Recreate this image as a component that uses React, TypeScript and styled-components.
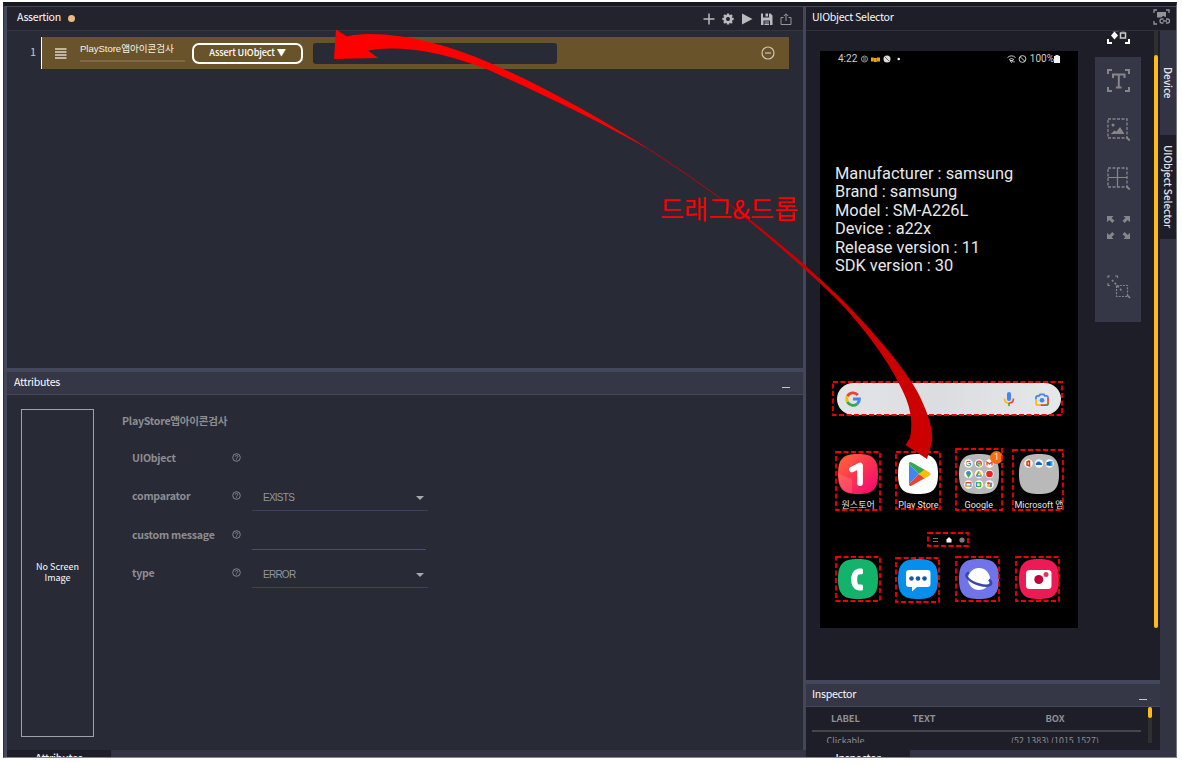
import React from 'react';
import styled, { createGlobalStyle, css } from 'styled-components';

const c = {
  line: '#43475b',
  head: '#353746',
  headDark: '#23232e',
  body: '#282a35',
  deep: '#1e1e28',
  rail: '#323443',
  gold: '#69532a',
  yellow: '#ffbb1c',
};

const ui = '"Noto Sans CJK KR", "Noto Sans", sans-serif';

const Global = createGlobalStyle`
  * { box-sizing: border-box; }
  body { margin: 0; background: #fff; font-family: ${ui}; overflow: hidden; }
  svg { display: block; flex: none; }
`;

const Page = styled.div`
  position: relative;
  width: 1182px;
  height: 763px;
  padding: 2px 0 0 3px;
`;
const Frame = styled.div`
  width: 1174px;
  height: 756px;
  overflow: hidden;
  background: ${c.rail};
  border-top: 4px solid #181821;
  border-left: 1px solid #2d303d;
  border-right: 1px solid #777783;
  border-bottom: 1px solid #85858f;
`;
const Workspace = styled.div`
  display: flex;
  height: 751px;
  border-top: 1px solid ${c.line};
  border-left: 3px solid ${c.line};
`;
const LeftColumn = styled.div`
  width: 796px;
  flex: none;
  display: flex;
  flex-direction: column;
`;
const VSplit = styled.div`
  width: 3px;
  flex: none;
  height: 743px;
  background: ${c.line};
`;
const HSplit = styled.div`
  height: 4px;
  flex: none;
  background: ${c.line};
`;
const RightColumn = styled.div`
  flex: 1;
  display: flex;
  flex-direction: column;
`;
const Header = styled.div<{ $bg: string; $line: string; $x?: number; $h?: number }>`
  display: flex;
  align-items: center;
  height: ${p => p.$h ?? 24}px;
  flex: none;
  padding: 0 11px ${p => (p.$h ? 3 : 4)}px ${p => p.$x ?? 10}px;
  background: ${p => p.$bg};
  border-bottom: 1px solid ${p => p.$line};
  color: #fafafb;
  font-size: 10.6px;
  letter-spacing: -0.28px;
  line-height: 16px;
  white-space: nowrap;
`;
const Dot = styled.span`
  width: 7px;
  height: 7px;
  margin: 4px 0 0 7px;
  border-radius: 50%;
  background: #edba82;
`;
const Tools = styled.div`
  display: flex;
  align-items: center;
  gap: 7px;
  margin: 5px 0 0 auto;
`;
const Minimize = styled.i`
  width: 8px;
  height: 1px;
  margin: 12px 2px 0 auto;
  background: #c6c6cc;
`;

const AssertBody = styled.div`
  height: 337px;
  flex: none;
  padding-top: 6px;
  background: ${c.body};
`;
const AssertRow = styled.div`
  display: flex;
  height: 32px;
`;
const LineNo = styled.div`
  width: 34px;
  padding: 6px 5px 0 0;
  text-align: right;
  color: #c5c5c9;
  font-size: 11px;
  line-height: 16px;
`;
const AssertCard = styled.div`
  display: flex;
  align-items: center;
  width: 748px;
  padding: 0 14px 0 13px;
  border-left: 1px solid #fff;
  background: ${c.gold};
`;
const NameField = styled.div`
  width: 105px;
  height: 21px;
  margin: -3px 7px 0 13px;
  border-bottom: 2px solid #7d6946;
  color: #f4f1ea;
  font: 9.6px/16px "Liberation Sans", "Noto Sans CJK KR", sans-serif;
  letter-spacing: -0.05px;
  white-space: nowrap;
`;
const Pill = styled.button`
  width: 111px;
  height: 21px;
  margin: 0 10px 0 0;
  padding: 0 0 2px 0;
  border: 2px solid #fff;
  border-radius: 7px;
  background: transparent;
  color: #fff;
  font: 500 9.2px/14px ${ui};
  letter-spacing: -0.15px;
  white-space: nowrap;
`;
const DropInput = styled.div`
  width: 244px;
  height: 21px;
  margin-right: auto;
  border-radius: 3px;
  background: ${c.body};
`;

const AttrBody = styled.div`
  display: flex;
  height: 355px;
  flex: none;
  padding: 14px 0 0 14px;
  background: ${c.body};
`;
const Preview = styled.div`
  display: flex;
  align-items: center;
  justify-content: center;
  width: 73px;
  height: 328px;
  padding-bottom: 2px;
  border: 1px solid #9fa0a8;
  color: #fafafb;
  font-size: 9px;
  line-height: 11px;
  text-align: center;
`;
const Form = styled.div`
  margin-left: 28px;
  padding-top: 4px;
  color: #8d8d92;
`;
const FormTitle = styled.div`
  height: 28px;
  font-size: 10.6px;
  font-weight: 700;
  letter-spacing: -0.25px;
  line-height: 16px;
`;
const FormRow = styled.div`
  display: flex;
  height: 38.4px;
  padding-left: 10px;
  font-size: 10.6px;
  font-weight: 700;
  line-height: 16px;
`;
const FieldName = styled.div`
  width: 100px;
  padding-top: 9px;
  letter-spacing: -0.26px;
  white-space: nowrap;
`;
const HelpSlot = styled.div`
  width: 20px;
  padding-top: 12px;
`;
const Field = styled.div<{ $w: number; $line: string }>`
  display: flex;
  align-items: center;
  justify-content: space-between;
  width: ${p => p.$w}px;
  height: 26px;
  margin-top: 6px;
  padding: 0 4px 0 11px;
  border-bottom: 1px solid ${p => p.$line};
  color: #95959a;
  font: 10px/14px "Liberation Sans", sans-serif;
  letter-spacing: -0.75px;
`;
const Caret = styled.i`
  border: 4px solid transparent;
  border-top-color: #a9a9ad;
  border-bottom: 0;
`;

const BottomTabs = styled.div`
  height: 7px;
  flex: none;
  overflow: hidden;
  background: ${c.rail};
`;
const BottomTab = styled.div`
  width: 104px;
  height: 16px;
  background: ${c.deep};
  color: #f2f2f4;
  font-size: 10.4px;
  font-weight: 500;
  letter-spacing: -0.2px;
  line-height: 15px;
  text-align: center;
`;

const SelectorArea = styled.div`
  display: flex;
  flex: 1;
  min-height: 0;
`;
const SelectorMain = styled.div`
  width: 354px;
  flex: none;
  display: flex;
  flex-direction: column;
`;
const Stage = styled.div`
  display: flex;
  height: 649px;
  flex: none;
  background: ${c.deep};
`;
const Phone = styled.div`
  position: relative;
  width: 258px;
  height: 577px;
  margin: 20px 17px 0 14px;
  background: #000;
  color: #e8e8e8;
  font-family: Roboto, "Noto Sans CJK KR", sans-serif;
`;
const StatusBar = styled.div`
  display: flex;
  align-items: center;
  gap: 3px;
  height: 15px;
  padding: 0 18px 0 18px;
  color: #cfcfcf;
  font-size: 10px;
`;
const Grow = styled.span`
  flex: 1;
`;
const Battery = styled.svg`
  margin-left: -3px;
`;
const Info = styled.div`
  margin: 99px 0 0 15px;
  height: 112px;
  font-size: 16.4px;
  line-height: 18.4px;
  white-space: nowrap;
`;
const Search = styled.div`
  display: flex;
  align-items: center;
  width: 224px;
  height: 32px;
  margin: 106px 0 0 17px;
  padding: 0 12px 0 8px;
  border-radius: 16px;
  background: linear-gradient(90deg, #e3e4e6, #dcdde1 45%, #e5e7e8);
`;
const MicGap = styled.span`
  width: 20px;
`;
const AppRow = styled.div<{ $top: number }>`
  display: grid;
  grid-template-columns: repeat(4, 60.3px);
  margin: ${p => p.$top}px 0 0 8px;
`;
const AppCell = styled.div`
  display: flex;
  flex-direction: column;
  align-items: center;
  font-size: 9px;
  line-height: 12px;
  white-space: nowrap;
`;
const AppLabel = styled.div`
  margin-top: 5px;
`;
const Pager = styled.div`
  display: flex;
  align-items: center;
  justify-content: center;
  gap: 7px;
  height: 14px;
  margin-top: 22px;
`;
const Selection = styled.div<{ $x: number; $y: number; $w: number; $h: number }>`
  position: absolute;
  left: ${p => p.$x}px;
  top: ${p => p.$y}px;
  width: ${p => p.$w}px;
  height: ${p => p.$h}px;
`;
const Badge = styled.div`
  position: absolute;
  left: 170px;
  top: 400px;
  width: 13px;
  height: 13px;
  border-radius: 50%;
  background: #f66d10;
  color: #ffe9d8;
  font-size: 9px;
  line-height: 13px;
  text-align: center;
`;
const ToolColumn = styled.div`
  width: 46px;
  display: flex;
  flex-direction: column;
`;
const ActiveTool = styled.div`
  display: flex;
  align-items: flex-end;
  justify-content: center;
  height: 14px;
  margin: 0 0 12px 1px;
  overflow: hidden;
`;
const Palette = styled.div`
  display: flex;
  flex-direction: column;
  align-items: center;
  gap: 25px;
  height: 265px;
  padding: 12px 0 0 1px;
  background: ${c.head};
  & > :last-child { margin-top: 10px; }
`;
const ScrollTrack = styled.div<{ $h: number; $w: number; $m: string }>`
  width: ${p => p.$w}px;
  height: ${p => p.$h}px;
  margin: ${p => p.$m};
  background: #302f30;
`;
const ScrollThumb = styled.div<{ $h: number; $top: number }>`
  height: ${p => p.$h}px;
  border-radius: 2px;
  background: ${c.yellow};
  transform: translateY(${p => p.$top}px);
`;
const Rail = styled.div`
  flex: 1;
  background: ${c.rail};
`;
const RailTab = styled.div<{ $active?: boolean }>`
  display: flex;
  align-items: center;
  justify-content: center;
  height: 104px;
  width: 16px;
  writing-mode: vertical-rl;
  color: #e4e4e6;
  font-size: 10.2px;
  font-weight: 500;
  letter-spacing: -0.12px;
  line-height: 19px;
  white-space: nowrap;
  ${p => p.$active && css`background: ${c.deep};`}
`;
const InspectBody = styled.div`
  display: flex;
  height: 43px;
  flex: none;
  background: ${c.deep};
  overflow: hidden;
`;
const Table = styled.div`
  width: 329px;
  height: 36px;
  margin-left: 6px;
  overflow: hidden;
  color: #8f8f94;
`;
const Cells = styled.div<{ $head?: boolean }>`
  display: grid;
  grid-template-columns: 67px 90px 1fr;
  text-align: center;
  white-space: nowrap;
  font-size: ${p => (p.$head ? 9.4 : 8.9)}px;
  font-weight: ${p => (p.$head ? 700 : 400)};
  line-height: ${p => (p.$head ? 22 : 17)}px;
  ${p => p.$head && css`padding-bottom: 1px; border-bottom: 2px solid #46464b;`}
`;
const Annotation = styled.svg`
  position: absolute;
  left: 0;
  top: 0;
  pointer-events: none;
`;
const DragLabel = styled.div`
  position: absolute;
  left: 660px;
  top: 189px;
  color: #fe0000;
  font-size: 26.2px;
  font-weight: 400;
  line-height: 38px;
  white-space: nowrap;
`;

const Help = () => (
  <svg width="9" height="9" viewBox="0 0 9 9" fill="none" stroke="#8d8d92" strokeWidth=".9">
    <circle cx="4.5" cy="4.5" r="3.8" />
    <path d="M3.2 3.7c0-1.8 2.7-1.7 2.7-.1 0 1-1.4.9-1.4 2M4.5 6.3v.8" />
  </svg>
);

const Gear = () => (
  <svg width="12" height="12" viewBox="0 0 24 24">
    <g fill="#b9b9be">
      {[0, 45, 90, 135].map(a => (
        <rect key={a} x="9.5" y=".8" width="5" height="22.4" rx="1" transform={`rotate(${a} 12 12)`} />
      ))}
      <circle cx="12" cy="12" r="8.5" />
    </g>
    <circle cx="12" cy="12" r="4" fill={c.headDark} />
  </svg>
);

const Corners = ({ color = '#85858a' }: { color?: string }) => (
  <path d="M1 5V1H5M18 1H22V5M22 18V22H18M5 22H1V18" stroke={color} strokeWidth="2" fill="none" />
);
const DashedLens = () => (
  <>
    <rect x="1" y="1" width="19" height="19" fill="none" stroke="#85858a" strokeWidth="1.3" strokeDasharray="3 1.5" />
    <path d="M19.5 19.5l3.3 3" stroke="#85858a" strokeWidth="1.8" />
  </>
);
const ToolIcon = ({ children }: { children: React.ReactNode }) => (
  <svg width="24" height="24" viewBox="0 0 24 24">{children}</svg>
);

const TextTool = () => (
  <ToolIcon>
    <Corners />
    <path d="M6 9V5.5H17.5V9M11.8 5.5V18.5M9 18.5H14.6" stroke="#85858a" strokeWidth="2" fill="none" />
  </ToolIcon>
);
const ImageTool = () => (
  <ToolIcon>
    <DashedLens />
    <circle cx="6" cy="7" r="1.5" fill="#85858a" />
    <path d="M3.5 16l4-3.5 2 1L13 9l4.5 7z" fill="#85858a" />
  </ToolIcon>
);
const GridTool = () => (
  <ToolIcon>
    <DashedLens />
    <path d="M10.5 1v19M1 10.5h19" stroke="#85858a" strokeWidth="1.2" />
  </ToolIcon>
);
const ExpandTool = () => (
  <ToolIcon>
    <path d="M0 0h6.5L4.6 1.9 7.5 4.8 5.3 7 2.3 4 0 6.3zM23 0h-6.5l1.9 1.9-2.9 2.9L17.7 7l3-3L23 6.3zM0 23h6.5l-1.9-1.9 2.900-2.900L5.300 16l-3 3L0 16.700zM23 23h-6.500l1.900-1.900-2.900-2.900L17.700 16l3 3L23 16.700z" fill="#85858a" />
  </ToolIcon>
);
const LinkedTool = () => (
  <ToolIcon>
    <g fill="none" stroke="#85858a" strokeWidth="1.2">
      <path d="M1 3V1h2M8 1h2.5v2M1 8v2.5h2" />
      <rect x="9.5" y="10.5" width="11" height="11" strokeDasharray="2 1.2" />
      <path d="M5 5l11 12" strokeWidth="1.7" strokeDasharray="2 2" />
      <path d="M20 20l3 3" strokeWidth="1.6" />
    </g>
  </ToolIcon>
);

const squircle = 'M20 0C35 0 40 5 40 20S35 40 20 40 0 35 0 20 5 0 20 0Z';
const AppIcon = ({ bg, children }: { bg: string; children?: React.ReactNode }) => (
  <svg width="40" height="40" viewBox="0 0 40 40">
    <path d={squircle} fill={bg} />
    {children}
  </svg>
);
const GoogleG = ({ size, x, y }: { size: number; x?: number; y?: number }) => (
  <svg x={x} y={y} width={size} height={size} viewBox="0 0 20 20" fill="none" strokeWidth="3.6">
    <path d="M16 5A8 8 0 0 0 3 6.5" stroke="#ea4335" />
    <path d="M3 6.5A8 8 0 0 0 3 13.5" stroke="#fbbc05" />
    <path d="M3 13.5A8 8 0 0 0 15.3 16" stroke="#34a853" />
    <path d="M15.3 16A8 8 0 0 0 18 10H10" stroke="#4285f4" />
  </svg>
);

const folderDots: [number, number][] = [9.5, 20, 30.5].flatMap(y => [9.5, 20, 30.5].map(x => [x, y] as [number, number]));

const GoogleFolder = () => (
  <AppIcon bg="#b9b9b9">
    {folderDots.map(([x, y]) => <circle key={`${x}-${y}`} cx={x} cy={y} r="4.3" fill="#f7f7f7" />)}
    <GoogleG size={6} x={6.5} y={6.5} />
    <circle cx="20" cy="9.5" r="3" fill="#ea4335" />
    <path d="M20 9.5l2.6 1.5A3 3 0 0 1 20 12.5z" fill="#fbbc05" />
    <path d="M20 9.5v3a3 3 0 0 1-2.7-4.3z" fill="#34a853" />
    <circle cx="20" cy="9.5" r="1.4" fill="#4285f4" stroke="#fff" strokeWidth=".5" />
    <path d="M28 11.5V8l2.5 2L33 8v3.5" fill="none" stroke="#ea4335" strokeWidth="1.3" />
    <path d="M9.5 24l-2.3-4a2.4 2.4 0 1 1 4.6 0z" fill="#34a853" />
    <path d="M7.3 18.5a2.4 2.4 0 0 1 4 0l-1.8 1.8z" fill="#4285f4" />
    <path d="M20 17.5l-2.7 4.5" stroke="#34a853" strokeWidth="1.5" />
    <path d="M20 17.5l2.7 4.5" stroke="#fbbc05" strokeWidth="1.5" />
    <path d="M17.5 22h5" stroke="#4285f4" strokeWidth="1.5" />
    <circle cx="30.5" cy="20" r="3.3" fill="#f02020" />
    <rect x="7" y="28.7" width="5" height="3.5" fill="none" stroke="#4285f4" strokeWidth="1.1" />
    <path d="M7 28.7h5" stroke="#ea4335" strokeWidth="1.1" />
    <path d="M7 32.2h3" stroke="#fbbc05" strokeWidth="1.1" />
    <rect x="17.5" y="28.7" width="3.8" height="3.8" fill="none" stroke="#34a853" strokeWidth="1.2" />
    <path d="M17.5 32v-3.3" stroke="#4285f4" strokeWidth="1.2" />
    <path d="M21.3 30.5l1.7-1.5v3z" fill="#fbbc05" />
    <circle cx="29.5" cy="29.3" r="1.4" fill="#ea4335" />
    <circle cx="32" cy="29.7" r="1.3" fill="#4285f4" />
    <circle cx="29.2" cy="31.8" r="1.3" fill="#fbbc05" />
    <circle cx="31.7" cy="32" r="1.3" fill="#34a853" />
  </AppIcon>
);

const topApps = [
  {
    label: '원스토어',
    icon: (
      <svg width="40" height="40" viewBox="0 0 40 40">
        <defs>
          <linearGradient id="one" x1="0" y1="0" x2="1" y2="1">
            <stop offset="0" stopColor="#ff6a35" />
            <stop offset=".5" stopColor="#fb3450" />
            <stop offset="1" stopColor="#f4007a" />
          </linearGradient>
        </defs>
        <path d={squircle} fill="url(#one)" />
        <path d="M0 20L14 25V39Q1 38 0 20" fill="#fff" opacity=".12" />
        <path d="M14 15.5L22 11.5V29" fill="none" stroke="#fff" strokeWidth="5.8" strokeLinecap="round" strokeLinejoin="round" />
      </svg>
    ),
  },
  {
    label: 'Play Store',
    icon: (
      <AppIcon bg="#fff">
        <path d="M11 10v20l10-10z" fill="#4285f4" />
        <path d="M11 10q0-3 3-1.5L27 16l-6 4z" fill="#34a853" />
        <path d="M11 30q0 3 3 1.5L27 24l-6-4z" fill="#ea4335" />
        <path d="M26.500 15.500l5 3q2 1.500 0 3l-5 3L21 20z" fill="#fbbc05" />
      </AppIcon>
    ),
  },
  { label: 'Google', icon: <GoogleFolder /> },
  {
    label: 'Microsoft 앱',
    icon: (
      <AppIcon bg="#b9b9b9">
        {[9.5, 20, 30.5].map(x => <circle key={x} cx={x} cy="9.5" r="4.3" fill="#f5f5f5" />)}
        <path d="M10.5 6.8L8 8v3l2.5 1V6.800" fill="none" stroke="#d83b01" strokeWidth="1.5" />
        <path d="M17 11a1.500 1.500 0 0 1 .5-2.300 2.500 2.500 0 0 1 4.300 0 1.500 1.500 0 0 1 1 2.300z" fill="#0a6ac4" />
        <rect x="29.5" y="7" width="4" height="5" fill="#28a8ea" />
        <rect x="27.5" y="8" width="4" height="3.5" fill="#0a5fb8" />
      </AppIcon>
    ),
  },
];

const dockApps = [
  <AppIcon bg="#14b36c">
    <path d="M23.500 9.500H21C10.500 10.500 10.500 30.500 21 31.500h2.500q1.500 0 1.500-1.500v-3q0-1.500-1.500-1.500L20.500 25.500c-1.700-1-1.700-9 0-10l3-.2q1.500 0 1.500-1.500V11q0-1.500-1.500-1.500z" fill="#fff" />
  </AppIcon>,
  <AppIcon bg="#048fec">
    <path d="M11 11h18.500q3 0 3 3v11q0 3-3 3H19l-5 4.500V28h-3q-3 0-3-3V14q0-3 3-3z" fill="#fff" />
    <g fill="#1658a8"><circle cx="13.5" cy="19.5" r="2.3" /><circle cx="20" cy="19.5" r="2.3" /><circle cx="26.5" cy="19.5" r="2.3" /></g>
  </AppIcon>,
  <AppIcon bg="#6f75e8">
    <circle cx="20" cy="20" r="11" fill="#fff" />
    <path d="M10 13.500C3 16 11 23 20 25.500s16 1 10-5" fill="none" stroke="#3c46aa" strokeWidth="2.5" />
  </AppIcon>,
  <AppIcon bg="#ed1b55">
    <rect x="7" y="11" width="25.5" height="19" rx="3.5" fill="#fff" />
    <circle cx="19.8" cy="20.5" r="4.5" fill="#c4003c" />
    <circle cx="27" cy="15.5" r="2.5" fill="#e8325c" />
  </AppIcon>,
];

const selections: [number, number, number, number][] = [
  [832, 381, 231, 35],
  [835, 451, 46, 60], [895, 451, 46, 59], [955, 448, 48, 63], [1012, 449, 52, 62],
  [927, 532, 42, 15],
  [835, 556, 46, 46], [895, 557, 45, 46], [955, 556, 45, 46], [1015, 556, 45, 46],
];

const StatusIcons = () => (
  <svg width="42" height="10" viewBox="0 0 42 10">
    <circle cx="4.5" cy="5" r="3" fill="none" stroke="#aaa" strokeWidth=".9" />
    <path d="M3 4h3M3 6h3" stroke="#aaa" strokeWidth=".9" />
    <path d="M11 3.500h2.800v4H11zM14 4h2.800v4H14zM17 3.500h3v4h-3z" fill="#e6a51b" />
    <circle cx="27" cy="5" r="3.5" fill="#ddd" />
    <path d="M25 3l4 4" stroke="#666" strokeWidth="1" />
    <circle cx="38.7" cy="5" r="1.3" fill="#eee" />
  </svg>
);

const SignalIcons = () => (
  <svg width="20" height="10" viewBox="0 0 20 10" fill="none" stroke="#ccc" strokeWidth="1">
    <path d="M.5 3.500Q4.500 .2 8.500 3.500M2 5.500q2.500-2 5 0" />
    <path d="M3 6.500h3L4.500 8.500zM7 7v1.500" />
    <circle cx="15.5" cy="5" r="3.4" />
    <path d="M13 2.700l5 4.600" />
  </svg>
);

export default function App() {
  return (
    <Page>
      <Global />
      <Frame>
        <Workspace>
          <LeftColumn>
            <Header $bg={c.headDark} $line="#343644">
              Assertion<Dot />
              <Tools>
                <svg width="12" height="12" viewBox="0 0 12 12"><path d="M6 .5v11M.5 6h11" stroke="#b9b9be" strokeWidth="1.5" /></svg>
                <Gear />
                <svg width="12" height="12" viewBox="0 0 12 12"><path d="M1 .5L11.500 6 1 11.500z" fill="#b9b9be" /></svg>
                <svg width="13" height="12" viewBox="0 0 13 12"><path d="M1 .5h2v4h6v-4h1.500L12.500 2.500V12H10V7.500H3.500V12H1zM5.500.5H8v3H5.500zM4.500 8.500h4.500v1H4.500zM4.500 10.500h4.500V12H4.500z" fill="#b9b9be" /></svg>
                <svg width="12" height="12" viewBox="0 0 12 12" fill="none" stroke="#96969c" strokeWidth="1"><path d="M3.500 4.500H1v7h10v-7H8.500M6 8V1M3.800 3L6 .8 8.200 3" /></svg>
              </Tools>
            </Header>
            <AssertBody>
              <AssertRow>
                <LineNo>1</LineNo>
                <AssertCard>
                  <svg width="12" height="11" viewBox="0 0 12 11"><path d="M0 1h11.500M0 4h11.500M0 7h11.500M0 10h11.500" stroke="#ddd8cd" strokeWidth="1.6" /></svg>
                  <NameField>PlayStore앱아이콘검사</NameField>
                  <Pill>Assert UIObject ▼</Pill>
                  <DropInput />
                  <svg width="14" height="14" viewBox="0 0 14 14" fill="none" stroke="#cfc6b4" strokeWidth="1.2"><circle cx="7" cy="7" r="6" /><path d="M4 7h6" /></svg>
                </AssertCard>
              </AssertRow>
            </AssertBody>
            <HSplit />
            <Header $bg={c.head} $line={c.line} $x={7} $h={23}>Attributes<Minimize /></Header>
            <AttrBody>
              <Preview>No Screen<br />Image</Preview>
              <Form>
                <FormTitle>PlayStore앱아이콘검사</FormTitle>
                <FormRow><FieldName>UIObject</FieldName><HelpSlot><Help /></HelpSlot></FormRow>
                <FormRow><FieldName>comparator</FieldName><HelpSlot><Help /></HelpSlot><Field $w={176} $line="#3f3e61">EXISTS<Caret /></Field></FormRow>
                <FormRow><FieldName>custom message</FieldName><HelpSlot><Help /></HelpSlot><Field $w={174} $line="#4d4a7c" /></FormRow>
                <FormRow><FieldName>type</FieldName><HelpSlot><Help /></HelpSlot><Field $w={176} $line="#3f3e61">ERROR<Caret /></Field></FormRow>
              </Form>
            </AttrBody>
            <BottomTabs><BottomTab>Attributes</BottomTab></BottomTabs>
          </LeftColumn>
          <VSplit />
          <RightColumn>
            <Header $bg={c.deep} $line="#302f3c" $x={6}>
              UIObject Selector
              <Grow />
              <svg width="18" height="17" viewBox="0 0 18 17" fill="none" stroke="#929297" strokeWidth="1.3" transform="translate(6 1)">
                <path d="M1 4V1h3M13 1h3v3M1 12v3h3" />
                <path d="M4 3h9v5l-3-1-2 1.500H4z" fill="#929297" stroke="none" />
                <path d="M10.500 10H9a2 2 0 0 0 0 4h1.500M13 10h1.500a2 2 0 0 1 0 4H13M10 12h4" />
              </svg>
            </Header>
            <SelectorArea>
              <SelectorMain>
                <Stage>
                  <Phone>
                    <StatusBar>
                      4:22<StatusIcons /><Grow /><SignalIcons />100%
                      <Battery width="6" height="8" viewBox="0 0 6 8"><path d="M1.500 0h3v1H6v7H0V1h1.500z" fill="#f2f2f2" /></Battery>
                    </StatusBar>
                    <Info>
                      Manufacturer : samsung<br />Brand : samsung<br />Model : SM-A226L<br />Device : a22x<br />Release version : 11<br />SDK version : 30
                    </Info>
                    <Search>
                      <GoogleG size={16} />
                      <Grow />
                      <svg width="12" height="15" viewBox="0 0 12 15" fill="none" strokeWidth="1.6">
                        <rect x="4" y="0" width="4" height="9" rx="2" fill="#4285f4" />
                        <path d="M1.500 6.500q0 4.500 4.500 4.500" stroke="#fbbc05" />
                        <path d="M10.500 6.500q0 4.500-4.500 4.500" stroke="#ea4335" />
                        <path d="M6 11v3" stroke="#34a853" />
                      </svg>
                      <MicGap />
                      <svg width="14" height="13" viewBox="0 0 15 14" fill="none" strokeWidth="1.9">
                        <path d="M1 7V5q0-2 2-2h1.500L5.500 1.500h4l1 1.500H12q2 0 2 2" stroke="#4285f4" />
                        <path d="M14 5v4" stroke="#ea4335" />
                        <path d="M1 7v3.500Q1 13 3 13h3" stroke="#fbbc05" />
                        <path d="M6 13h6q2 0 2-2V9" stroke="#ea4335" />
                        <path d="M11 13h1q2 0 2-2" stroke="#34a853" />
                        <circle cx="7.5" cy="7.8" r="2.5" fill="#4285f4" />
                      </svg>
                    </Search>
                    <AppRow $top={39}>
                      {topApps.map(a => <AppCell key={a.label}>{a.icon}<AppLabel>{a.label}</AppLabel></AppCell>)}
                    </AppRow>
                    <Pager>
                      <svg width="6" height="6" viewBox="0 0 6 6"><path d="M0 1.500h5M0 4.500h5" stroke="#777" strokeWidth="1.2" /></svg>
                      <svg width="6" height="6" viewBox="0 0 6 6"><path d="M3 0l2.500 2.500V5.500h-5v-3z" fill="#fff" /></svg>
                      <svg width="6" height="6" viewBox="0 0 6 6"><circle cx="3" cy="3" r="2.6" fill="#7e7e7e" /></svg>
                    </Pager>
                    <AppRow $top={12}>
                      {dockApps.map((icon, i) => <AppCell key={i}>{icon}</AppCell>)}
                    </AppRow>
                    <Badge>1</Badge>
                    {selections.map(([x, y, w, h]) => (
                      <Selection key={`${x}-${y}`} $x={x - 820} $y={y - 51} $w={w} $h={h}>
                        <svg width={w} height={h}><rect x="1" y="1" width={w - 2} height={h - 2} fill="none" stroke="#f00000" strokeWidth="1.8" strokeDasharray="5 2.5" /></svg>
                      </Selection>
                    ))}
                  </Phone>
                  <ToolColumn>
                    <ActiveTool>
                      <svg width="24" height="24" viewBox="0 0 24 24">
                        <Corners color="#fff" />
                        <path d="M7.500 11l3.500 4-3.500 4L4 15z" fill="#fff" transform="translate(0 -.5)" />
                        <rect x="13.5" y="12" width="5" height="5" fill="none" stroke="#ccc" strokeWidth="1.5" />
                        <path d="M5.500 9.800h6M14 9.800h4" stroke="#aaa" />
                      </svg>
                    </ActiveTool>
                    <Palette>
                      <TextTool /><ImageTool /><GridTool /><ExpandTool /><LinkedTool />
                    </Palette>
                  </ToolColumn>
                  <ScrollTrack $w={4} $h={597} $m="0 0 0 13px"><ScrollThumb $h={573} $top={24} /></ScrollTrack>
                </Stage>
                <HSplit />
                <Header $bg={c.head} $line={c.line} $x={6} $h={23}>Inspector<Minimize /></Header>
                <InspectBody>
                  <Table>
                    <Cells $head><span>LABEL</span><span>TEXT</span><span>BOX</span></Cells>
                    <Cells><span>Clickable</span><span /><span>(52,1383) (1015,1527)</span></Cells>
                  </Table>
                  <ScrollTrack $w={4} $h={36} $m="0 0 0 7px"><ScrollThumb $h={11} $top={0} /></ScrollTrack>
                </InspectBody>
                <BottomTabs><BottomTab>Inspector</BottomTab></BottomTabs>
              </SelectorMain>
              <Rail>
                <RailTab>Device</RailTab>
                <RailTab $active>UIObject Selector</RailTab>
              </Rail>
            </SelectorArea>
          </RightColumn>
        </Workspace>
      </Frame>
      <Annotation width="1182" height="763" viewBox="0 0 1182 763">
        <path fill="#fe0000" d="M336 29.500L347 36.500C352 35 360 34 370 34C410 34 450 46 490 63C545 87 600 118 655 153C600 121.500 545 96 490 70.500C450 55 420 48.500 390 48.500Q378 48.500 368 50.500L378 58L334 59Z" />
        <path d="M650 150Q690 176 725 201.500" stroke="#d00000" strokeWidth=".9" fill="none" />
        <path fill="#cc0000" d="M722 199C765 229 825 281 854 312C880 340 902 365 917 391C927 410 934 430 932 442L927 459L905.500 445L910 438C914 415 909 400 891.500 370C882 353 863 328 846 309C824 285 767 235 722 199Z" />
      </Annotation>
      <DragLabel>드래그&amp;드롭</DragLabel>
    </Page>
  );
}
